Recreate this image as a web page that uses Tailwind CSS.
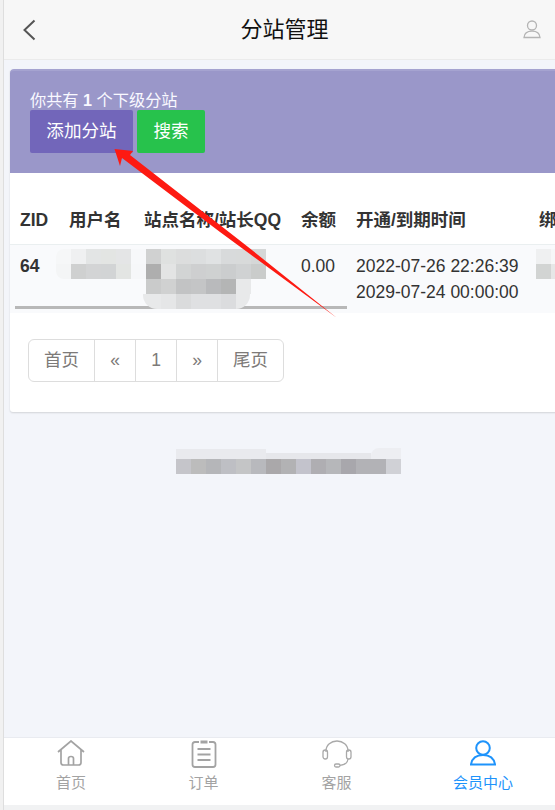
<!DOCTYPE html>
<html lang="zh">
<head>
<meta charset="utf-8">
<title>分站管理</title>
<script src="https://cdn.jsdelivr.net/npm/@tailwindcss/browser@4"></script>
</head>
<body class="m-0 bg-[#f1f2f3]">
<div class="relative flex h-[810px] w-[555px] overflow-hidden font-['Liberation_Sans','Noto_Sans_CJK_SC',sans-serif] text-[#333]">
  <div class="w-[4px] shrink-0 border-r border-[#dedede] bg-[#f1f1f1]"></div>
  <div class="flex min-w-0 flex-1 flex-col">
    <header class="relative flex h-[60px] shrink-0 items-center justify-center border-b border-[#ebebeb] bg-[#f7f7f7]">
      <svg class="absolute left-[18px] top-[19px]" width="14" height="22" viewBox="0 0 14 22" fill="none" stroke="#555" stroke-width="2"><path d="M12.5 1.5 2.500 11l10 9.500"/></svg>
      <h1 class="ml-[10px] text-[22px] font-normal leading-none text-[#111]">分站管理</h1>
      <svg class="absolute left-[519px] top-[20px]" width="18" height="19" viewBox="0 0 18 19" fill="none" stroke="#b4b4b4" stroke-width="1.3"><circle cx="9" cy="5.500" r="4.500"/><path d="M1 17.500c.3-4 3.200-6.300 8-6.300s7.700 2.300 8 6.300z"/></svg>
    </header>

    <main class="min-h-0 flex-1 bg-[#f3f5fa] pl-[6px] pt-[9px]">
      <section class="w-[560px] rounded-[3px] bg-white shadow-[0_1px_2px_rgba(0,0,0,0.14)]">
        <div class="h-[104px] rounded-t-[4px] border-t-2 border-[#a5a3d0] bg-[#9a97c9] pl-[20px] pt-[20px] text-white">
          <p class="h-[19px] text-[16.2px] leading-[19px] text-[#f9f9ff]">你共有 <b>1</b> 个下级分站</p>
          <div class="flex gap-[4px]">
            <button class="h-[43px] w-[103px] rounded-[2px] bg-[#7266ba] text-[17.6px] text-white">添加分站</button>
            <button class="h-[43px] w-[68px] rounded-[2px] bg-[#27c24c] text-[17.6px] text-white">搜索</button>
          </div>
        </div>

        <div class="relative mt-[24px] h-[116px] overflow-hidden">
          <table class="w-[700px] table-fixed border-collapse text-left text-[17.5px]">
            <colgroup>
              <col class="w-[49px]"><col class="w-[75px]"><col class="w-[157px]"><col class="w-[55px]"><col class="w-[183px]"><col>
            </colgroup>
            <thead>
              <tr class="h-[47px] border-b border-[#eaeff0]">
                <th class="pl-[10px] font-bold">ZID</th>
                <th class="pl-[10px] font-bold">用户名</th>
                <th class="whitespace-nowrap pl-[10px] font-bold">站点名称/站长QQ</th>
                <th class="pl-[10px] font-bold">余额</th>
                <th class="pl-[10px] font-bold">开通/到期时间</th>
                <th class="pl-[10px] font-bold">绑定</th>
              </tr>
            </thead>
            <tbody>
              <tr class="h-[69px] bg-[#f9fafc] align-top">
                <td class="pl-[10px] pt-[8px] font-bold leading-[26px]">64</td>
                <td></td>
                <td></td>
                <td class="pl-[10px] pt-[8px] leading-[26px]">0.00</td>
                <td class="whitespace-nowrap pl-[10px] pt-[8px] leading-[26px]">2022-07-26 22:26:39<br>2029-07-24 00:00:00</td>
                <td></td>
              </tr>
            </tbody>
          </table>
          <div class="absolute left-[5px] top-[109px] h-[3px] w-[332px] bg-[#b8b8b8]"></div>

          <div class="absolute left-[46px] top-[52px] grid grid-cols-[repeat(14,15px)] grid-rows-[repeat(2,15px)]">
            <i class="rounded-tl-[8px] bg-[#f6f7f8]"></i><i class="bg-[#eff0f1]"></i><i class="bg-[#e3e5e5]"></i><i class="bg-[#e3e5e3]"></i><i class="bg-[#e4e5e6]"></i><i class="bg-[#f7f8fa]"></i><i class="bg-[#d0d1d1]"></i><i class="bg-[#dfe1e0]"></i><i class="bg-[#dcdddd]"></i><i class="bg-[#dcdedf]"></i><i class="bg-[#e0e2e3]"></i><i class="bg-[#d8dadb]"></i><i class="bg-[#d8dada]"></i><i class="bg-[#d5d7d7]"></i>
            <i class="rounded-bl-[8px] bg-[#f4f5f6]"></i><i class="bg-[#cfd0d0]"></i><i class="bg-[#d3d4d5]"></i><i class="bg-[#d2d4d5]"></i><i class="bg-[#e3e5e3]"></i><i class="bg-[#f6f7f9]"></i><i class="bg-[#aeaeae]"></i><i class="bg-[#e3e4e4]"></i><i class="bg-[#d2d4d4]"></i><i class="bg-[#cecfd0]"></i><i class="bg-[#cfd1d1]"></i><i class="bg-[#cbcdce]"></i><i class="bg-[#d0d2d3]"></i><i class="bg-[#cacccb]"></i>
          </div>
          <div class="absolute left-[136px] top-[82px] grid grid-cols-[repeat(7,15px)] grid-rows-[repeat(1,15px)]">
            <i class="bg-[#cacbcb]"></i><i class="bg-[#d0d1d1]"></i><i class="bg-[#c2c3c4]"></i><i class="bg-[#c4c5c6]"></i><i class="bg-[#b9babc]"></i><i class="bg-[#b4b5b5]"></i><i class="bg-[#e8e9ea]"></i>
          </div>
          <div class="absolute left-[133px] top-[97px] flex h-[15px] w-[107px] overflow-hidden rounded-b-[14px]">
            <i class="w-[18px] bg-[#e8e9ea]"></i><i class="w-[15px] bg-[#e5e6e7]"></i><i class="w-[15px] bg-[#dadbdc]"></i><i class="w-[15px] bg-[#dfe0e2]"></i><i class="w-[15px] bg-[#dfe0e2]"></i><i class="w-[15px] bg-[#dbdcde]"></i><i class="w-[14px] bg-[#e8e9ea]"></i>
          </div>
          <div class="absolute left-[526px] top-[52px] grid w-[30px] grid-cols-[15px_15px] grid-rows-[15px_15px]">
            <i class="bg-[#eff0f1]"></i><i class="bg-[#f6f7f8]"></i><i class="bg-[#d2d4d3]"></i><i class="bg-[#e6e7e7]"></i>
          </div>
        </div>

        <nav class="ml-[18px] mt-[26px] flex h-[43px] w-[256px] rounded-[6px] border border-[#dddddd] text-[17.5px] text-[#7d7a78]">
          <a class="flex w-[66px] items-center justify-center border-r border-[#dddddd]">首页</a>
          <a class="flex w-[41px] items-center justify-center border-r border-[#dddddd]">«</a>
          <a class="flex w-[41px] items-center justify-center border-r border-[#dddddd]">1</a>
          <a class="flex w-[41px] items-center justify-center border-r border-[#dddddd]">»</a>
          <a class="flex flex-1 items-center justify-center">尾页</a>
        </nav>
        <div class="h-[30px]"></div>
      </section>

      <div class="ml-[166px] mt-[36px] w-[225px]">
        <div class="flex h-[11px] items-end">
          <i class="h-[10px] w-[90px] bg-[#e9eaee]"></i><i class="h-[6px] w-[105px] bg-[#e6e7eb]"></i><i class="h-[11px] w-[30px] rounded-tl-[8px] bg-[#edeef2]"></i>
        </div>
        <div class="grid grid-cols-[repeat(15,15px)] grid-rows-[15px]">
          <i class="bg-[#c5c5ca]"></i><i class="bg-[#bcbcbc]"></i><i class="bg-[#b5b6b9]"></i><i class="bg-[#bebfc4]"></i><i class="bg-[#c4c5c6]"></i><i class="bg-[#b8b9bd]"></i><i class="bg-[#aaa8aa]"></i><i class="bg-[#b2b2b4]"></i><i class="bg-[#c3c3cc]"></i><i class="bg-[#afaeb2]"></i><i class="bg-[#b6b7ba]"></i><i class="bg-[#a8a7ac]"></i><i class="bg-[#b2b2b6]"></i><i class="bg-[#b2b2b6]"></i><i class="bg-[#d0d1d6]"></i>
        </div>
      </div>
    </main>

    <footer class="grid h-[68px] shrink-0 grid-cols-[134px_131px_135px_1fr] border-t border-[#e9ebf0] bg-white text-[15px] leading-[18px] text-[#a3a3a3]">
      <a class="flex flex-col items-center pt-[2px]">
        <svg width="28" height="26" viewBox="0 0 28 26" fill="none" stroke="#a3a3a3" stroke-width="1.700"><path d="M1 12 14 1l13 11M4 10v12.500Q4 25 6.500 25h15q2.500 0 2.500-2.500V10M11.500 25v-6.500q0-2 2.500-2t2.500 2V25"/></svg>
        <span class="mt-[8px]">首页</span>
      </a>
      <a class="flex flex-col items-center pt-[2px]">
        <svg width="26" height="28" viewBox="0 0 26 28" fill="none" stroke="#a3a3a3" stroke-width="1.800"><path d="M8 2H4Q1.500 2 1.500 4.500v20Q1.500 27 4 27h18q2.500 0 2.500-2.500v-20Q24.500 2 22 2h-4M6.500 9h13M6.500 14.500h13M6.500 20h13"/><path d="M9.500 2h7" stroke-width="3"/></svg>
        <span class="mt-[6px]">订单</span>
      </a>
      <a class="flex flex-col items-center pt-[2px]">
        <svg width="30" height="28" viewBox="0 0 30 28" fill="none" stroke="#a9a9a9" stroke-width="1.300"><path d="M4 12V11C4 5 9 1 15 1s11 4 11 10v1"/><rect x="1" y="10" width="4.500" height="9" rx="2.200"/><rect x="24.500" y="10" width="4.500" height="9" rx="2.200"/><path d="M26 19c-.5 4-3.500 6-8 6.300"/><rect x="12.500" y="24" width="5.500" height="3" rx="1.500"/></svg>
        <span class="mt-[6px]">客服</span>
      </a>
      <a class="flex flex-col items-center pl-[7px] pt-[2px] text-[#1e93fb]">
        <svg width="26" height="26" viewBox="0 0 26 26" fill="none" stroke="#1e93fb" stroke-width="2"><circle cx="13" cy="8" r="6.800"/><path d="M1 24.500C2 18.500 6.500 15 13 15s11 3.500 12 9.500z"/></svg>
        <span class="mt-[8px]">会员中心</span>
      </a>
    </footer>
    <div class="h-[5px] shrink-0 bg-[#f1f2f3]"></div>
  </div>

  <svg class="pointer-events-none absolute left-0 top-0" width="555" height="810" viewBox="0 0 555 810"><polygon points="114.500,149 133,151 130,155 243,243 337,318 220,232 122,158 120,166" fill="#fd1a12"/></svg>
</div>
</body>
</html>
